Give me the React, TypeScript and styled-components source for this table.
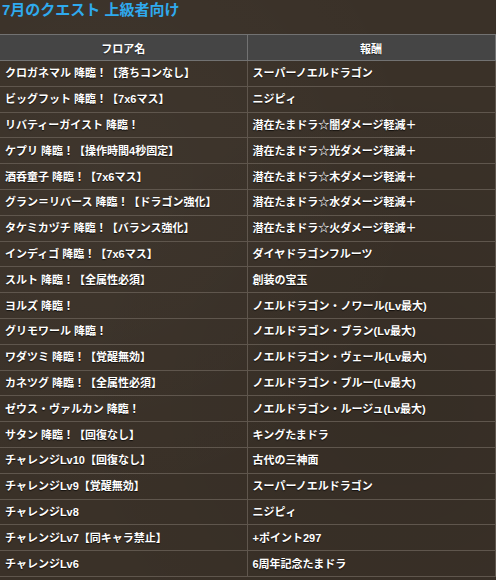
import React from "react";
import styled, { createGlobalStyle } from "styled-components";

const Global = createGlobalStyle`
  html, body { margin: 0; padding: 0; }
  body {
    background-color: #3a3128;
    background-image:
      radial-gradient(ellipse at 20% 30%, rgba(255,255,255,0.025), transparent 60%),
      radial-gradient(ellipse at 80% 70%, rgba(0,0,0,0.08), transparent 60%);
    font-family: "Liberation Sans", "Noto Sans CJK JP", sans-serif;
    color: #fff;
  }
`;

const Page = styled.div`
  width: 496px;
  height: 580px;
  overflow: hidden;
`;

const Title = styled.h2`
  margin: 0;
  padding: 0 0 0 2px;
  height: 34px;
  box-sizing: border-box;
  font-size: 15px;
  line-height: 20px;
  font-weight: 700;
  color: #2faaee;
  letter-spacing: 0;
`;

const Table = styled.table`
  width: 495px;
  border-collapse: collapse;
  table-layout: fixed;
`;

const HeadCell = styled.th`
  height: 25px;
  padding: 0;
  background: #454545;
  border: 1px solid #727272;
  font-size: 11px;
  font-weight: 700;
  text-align: center;
  color: #fff;
  text-shadow: 0 1px 1px rgba(0,0,0,0.6);
  &:first-child { border-left: none; }
`;

const Cell = styled.td`
  height: 24.8px;
  padding: 0 0 0 5px;
  border: 1px solid #5f564d;
  font-size: 11px;
  font-weight: 700;
  line-height: 14px;
  color: #fff;
  white-space: nowrap;
  text-shadow: 0 1px 1px rgba(0,0,0,0.7);
  &:first-child { border-left: none; }
`;

const rows: [string, string][] = [
  ["クロガネマル 降臨！【落ちコンなし】", "スーパーノエルドラゴン"],
  ["ビッグフット 降臨！【7x6マス】", "ニジピィ"],
  ["リバティーガイスト 降臨！", "潜在たまドラ☆闇ダメージ軽減＋"],
  ["ケプリ 降臨！【操作時間4秒固定】", "潜在たまドラ☆光ダメージ軽減＋"],
  ["酒呑童子 降臨！【7x6マス】", "潜在たまドラ☆木ダメージ軽減＋"],
  ["グラン＝リバース 降臨！【ドラゴン強化】", "潜在たまドラ☆水ダメージ軽減＋"],
  ["タケミカヅチ 降臨！【バランス強化】", "潜在たまドラ☆火ダメージ軽減＋"],
  ["インディゴ 降臨！【7x6マス】", "ダイヤドラゴンフルーツ"],
  ["スルト 降臨！【全属性必須】", "創装の宝玉"],
  ["ヨルズ 降臨！", "ノエルドラゴン・ノワール(Lv最大)"],
  ["グリモワール 降臨！", "ノエルドラゴン・ブラン(Lv最大)"],
  ["ワダツミ 降臨！【覚醒無効】", "ノエルドラゴン・ヴェール(Lv最大)"],
  ["カネツグ 降臨！【全属性必須】", "ノエルドラゴン・ブルー(Lv最大)"],
  ["ゼウス・ヴァルカン 降臨！", "ノエルドラゴン・ルージュ(Lv最大)"],
  ["サタン 降臨！【回復なし】", "キングたまドラ"],
  ["チャレンジLv10【回復なし】", "古代の三神面"],
  ["チャレンジLv9【覚醒無効】", "スーパーノエルドラゴン"],
  ["チャレンジLv8", "ニジピィ"],
  ["チャレンジLv7【同キャラ禁止】", "+ポイント297"],
  ["チャレンジLv6", "6周年記念たまドラ"],
];

export default function App() {
  return (
    <Page>
      <Global />
      <Title>7月のクエスト 上級者向け</Title>
      <Table>
        <colgroup>
          <col style={{ width: 247 }} />
          <col style={{ width: 248 }} />
        </colgroup>
        <thead>
          <tr>
            <HeadCell>フロア名</HeadCell>
            <HeadCell>報酬</HeadCell>
          </tr>
        </thead>
        <tbody>
          {rows.map(([a, b], i) => (
            <tr key={i}>
              <Cell>{a}</Cell>
              <Cell>{b}</Cell>
            </tr>
          ))}
        </tbody>
      </Table>
    </Page>
  );
}
